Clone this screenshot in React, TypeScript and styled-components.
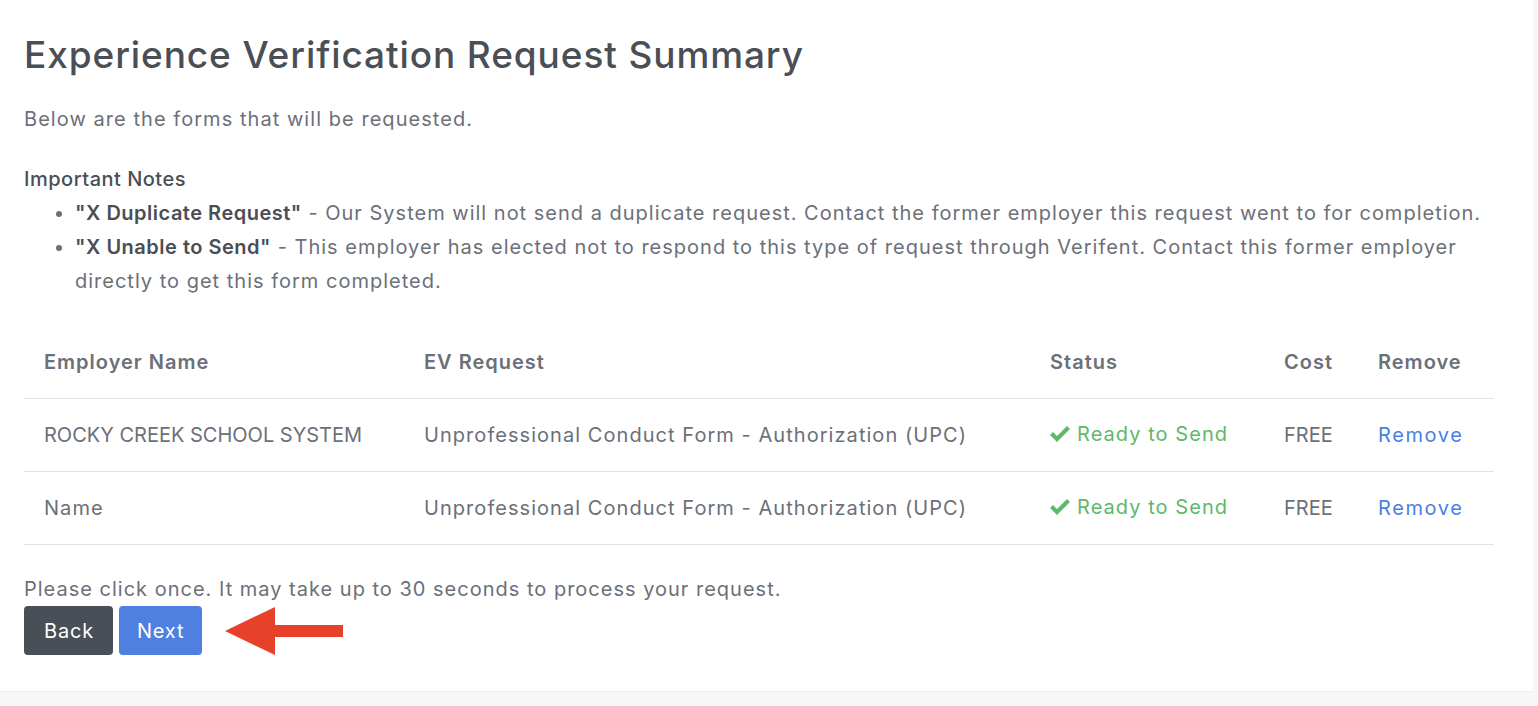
import React from "react";
import styled, { createGlobalStyle } from "styled-components";

const Global = createGlobalStyle`
  html, body { margin: 0; padding: 0; background: #f6f7f9; }
  body { font-family: Inter, "Open Sans", sans-serif; }
`;

const Page = styled.div`
  width: 1533px;
  min-height: 706px;
`;

const Card = styled.div`
  background: #ffffff;
  padding: 28px 28px 36px 24px;
  box-sizing: border-box;
  height: 692px;
  border-bottom: 1px solid #eceef1;
  letter-spacing: 1px;
`;

const Title = styled.h1`
  margin: 0;
  font-size: 37px;
  font-weight: 500;
  color: #4a4e55;
  line-height: 54px;
  letter-spacing: 0.9px;
`;

const Lead = styled.p`
  margin: 22px 0 0;
  font-size: 20px;
  color: #6b7079;
  line-height: 30px;
  letter-spacing: 1.05px;
`;

const NotesTitle = styled.div`
  margin-top: 30px;
  font-size: 20px;
  font-weight: 500;
  color: #4a4e55;
  line-height: 30px;
  letter-spacing: 0.5px;
`;

const NotesList = styled.ul`
  margin: 2px 0 0;
  padding-left: 51px;
  padding-right: 0;
  font-size: 20px;
  color: #6b7079;
  line-height: 34px;
`;

const Strong = styled.strong`
  font-weight: 600;
  color: #4a4e55;
  letter-spacing: 0.5px;
`;

const Table = styled.table`
  margin-top: 32px;
  width: 1470px;
  table-layout: fixed;
  border-collapse: collapse;
  font-size: 20px;
`;

const Th = styled.th<{ $w: number }>`
  box-sizing: border-box;
  text-align: left;
  font-weight: 600;
  color: #6b7079;
  padding: 0 20px 4px;
  height: 68px;
  border-bottom: 1px solid #dee2e6;
  width: ${(p) => `${p.$w}px`};
  letter-spacing: 1px;
`;

const Td = styled.td<{ $tone?: "green" | "blue"; $caps?: boolean }>`
  padding: 0 20px;
  height: 72px;
  border-bottom: 1px solid #dee2e6;
  color: ${(p) => (p.$tone === "green" ? "#5cb96a" : p.$tone === "blue" ? "#4a7fe2" : "#6b7079")};
  white-space: nowrap;
  letter-spacing: ${(p) => (p.$caps ? "0px" : p.$tone === "blue" ? "1.6px" : "1.05px")};
`;

const Status = styled.span`
  display: inline-flex;
  align-items: center;
  gap: 7px;
`;

const Hint = styled.p`
  margin: 32px 0 0;
  font-size: 20px;
  color: #6b7079;
  line-height: 24px;
`;

const Actions = styled.div`
  display: flex;
  align-items: center;
  gap: 6px;
  margin-top: 5px;
`;

const Button = styled.button<{ $variant: "dark" | "primary" }>`
  height: 49px;
  padding: ${(p) => (p.$variant === "dark" ? "0 19px 0 20px" : "0 18px")};
  border: none;
  border-radius: 4px;
  font-family: inherit;
  font-size: 20px;
  letter-spacing: 0.8px;
  color: #ffffff;
  background: ${(p) => (p.$variant === "dark" ? "#4a4e56" : "#4f80e1")};
`;

const ArrowWrap = styled.div`
  margin-left: 17px;
  display: flex;
  align-items: center;
`;

const Check = () => (
  <svg width="20" height="17" viewBox="0 0 20 17">
    <path d="M1.5 8.5 L7 14 L18.5 2.5" fill="none" stroke="#5cb96a" strokeWidth="4.2" />
  </svg>
);

const rows = [
  { name: "ROCKY CREEK SCHOOL SYSTEM", caps: true },
  { name: "Name", caps: false },
];

export default function App() {
  return (
    <Page>
      <Global />
      <Card>
        <Title>Experience Verification Request Summary</Title>
        <Lead>Below are the forms that will be requested.</Lead>
        <NotesTitle>Important Notes</NotesTitle>
        <NotesList>
          <li>
            <Strong>"X Duplicate Request"</Strong> - Our System will not send a duplicate request. Contact the former employer this request went to for completion.
          </li>
          <li>
            <Strong>"X Unable to Send"</Strong> - This employer has elected not to respond to this type of request through Verifent. Contact this former employer directly to get this form completed.
          </li>
        </NotesList>
        <Table>
          <thead>
            <tr>
              <Th $w={380}>Employer Name</Th>
              <Th $w={626}>EV Request</Th>
              <Th $w={234}>Status</Th>
              <Th $w={94}>Cost</Th>
              <Th $w={136}>Remove</Th>
            </tr>
          </thead>
          <tbody>
            {rows.map((r) => (
              <tr key={r.name}>
                <Td $caps={r.caps}>{r.name}</Td>
                <Td>Unprofessional Conduct Form - Authorization (UPC)</Td>
                <Td $tone="green">
                  <Status>
                    <Check />
                    Ready to Send
                  </Status>
                </Td>
                <Td $caps>FREE</Td>
                <Td $tone="blue">Remove</Td>
              </tr>
            ))}
          </tbody>
        </Table>
        <Hint>Please click once. It may take up to 30 seconds to process your request.</Hint>
        <Actions>
          <Button $variant="dark">Back</Button>
          <Button $variant="primary">Next</Button>
          <ArrowWrap>
            <svg width="120" height="50" viewBox="0 0 120 50">
              <polygon points="0,25 50,1 50,19 118,19 118,31 50,31 50,49" fill="#e8412a" />
            </svg>
          </ArrowWrap>
        </Actions>
      </Card>
    </Page>
  );
}
